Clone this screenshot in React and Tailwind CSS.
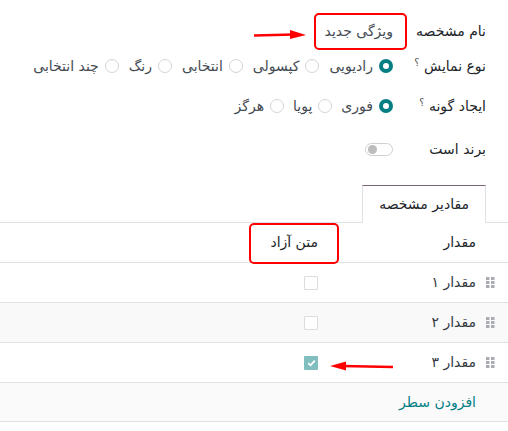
import React from "react";

const Radio = ({ checked }) =>
  checked ? (
    <span className="inline-block w-[14px] h-[14px] rounded-full border-[4px] border-[#017e84] bg-white shrink-0" />
  ) : (
    <span className="inline-block w-[14px] h-[14px] rounded-full border border-[#d4d4d4] bg-white shrink-0" />
  );

const Option = ({ checked, label }) => (
  <span className="flex items-center gap-[6px]">
    <Radio checked={checked} />
    <span className="text-[#444b53]">{label}</span>
  </span>
);

const Grip = () => (
  <svg width="9" height="11" viewBox="0 0 9 11" className="shrink-0">
    {[0, 4, 8].map((y) =>
      [0, 5].map((x) => (
        <rect key={`${x}-${y}`} x={x} y={y} width="3.5" height="3" fill="#a9adb3" />
      ))
    )}
  </svg>
);

const Checkbox = ({ checked }) =>
  checked ? (
    <span className="flex items-center justify-center w-[14px] h-[14px] bg-[#80bec0] rounded-[1px]">
      <svg width="9" height="8" viewBox="0 0 9 8">
        <path d="M1.2 4.2 L3.5 6.3 L7.8 1.6" stroke="white" strokeWidth="1.8" fill="none" />
      </svg>
    </span>
  ) : (
    <span className="block w-[14px] h-[14px] border border-[#dcdcdc] rounded-[1px] bg-white" />
  );

const rows = [
  { name: "مقدار ۱", checked: false, bg: "bg-white" },
  { name: "مقدار ۲", checked: false, bg: "bg-[#f9f9f9]" },
  { name: "مقدار ۳", checked: true, bg: "bg-white" },
];

export default function App() {
  return (
    <div
      dir="rtl"
      className="relative w-[508px] h-[431px] bg-white text-[14px] text-[#212529] overflow-hidden"
      style={{ fontFamily: '"DejaVu Sans", "Noto Sans", sans-serif' }}
    >
      <div className="pr-[22px] pt-[14px]">
        <div className="flex items-center h-[34px]">
          <div className="w-[93px] font-medium">نام مشخصه</div>
          <div className="relative text-[#444b53]">
            ویژگی جدید
            <span className="absolute -top-[8px] -bottom-[8px] -right-[14px] -left-[11px] border-[2.5px] border-[#f00] rounded-[5px]" />
          </div>
        </div>
        <div className="flex items-center h-[36px]">
          <div className="w-[93px] font-medium">
            نوع نمایش <sup className="text-[10px] text-[#555]">؟</sup>
          </div>
          <div className="flex items-center gap-[10px]">
            <Option checked label="رادیویی" />
            <Option label="کپسولی" />
            <Option label="انتخابی" />
            <Option label="رنگ" />
            <Option label="چند انتخابی" />
          </div>
        </div>
        <div className="flex items-center h-[36px] mt-[4px]">
          <div className="w-[93px] font-medium">
            ایجاد گونه <sup className="text-[10px] text-[#555]">؟</sup>
          </div>
          <div className="flex items-center gap-[9px]">
            <Option checked label="فوری" />
            <Option label="پویا" />
            <Option label="هرگز" />
          </div>
        </div>
        <div className="flex items-center h-[36px] mt-[7px]">
          <div className="w-[93px] font-medium">برند است</div>
          <span className="flex items-center justify-end w-[28px] h-[13px] rounded-full border border-[#d0d0d0] bg-white pl-[2px] pr-[2px]">
            <span className="w-[9px] h-[9px] rounded-full bg-[#bdbdbd]" />
          </span>
        </div>
      </div>

      <div className="mt-[18px] flex border-b border-[#dee2e6] pr-[22px]">
        <div className="h-[38px] -mb-[1px] px-[16px] flex items-center bg-white border-t border-t-[#7a6477] border-x border-x-[#dee2e6]">
          مقادیر مشخصه
        </div>
      </div>

      <div className="flex items-center h-[40px] border-b border-[#dee2e6] font-medium">
        <div className="w-[32px]" />
        <div className="w-[158px]">مقدار</div>
        <div className="relative">
          متن آزاد
          <span className="absolute -top-[9px] -bottom-[11px] -right-[21px] -left-[21px] border-[2.5px] border-[#f00] rounded-[5px]" />
        </div>
      </div>
      {rows.map((r) => (
        <div key={r.name} className={`flex items-center h-[40px] border-b border-[#dee2e6] ${r.bg}`}>
          <div className="w-[32px] flex justify-end pl-[10px]">
            <Grip />
          </div>
          <div className="w-[158px] text-[#343a40]">{r.name}</div>
          <Checkbox checked={r.checked} />
        </div>
      ))}
      <div className="flex items-center h-[39px] border-b border-[#dee2e6] bg-[#fafafa]">
        <div className="w-[32px]" />
        <div className="text-[#017e84]">افزودن سطر</div>
      </div>

      <svg className="absolute left-[254px] top-[29px]" width="54" height="12" viewBox="0 0 54 12">
        <line x1="0" y1="6.5" x2="40" y2="5.5" stroke="#f00" strokeWidth="2.5" />
        <path d="M36 1 L52 6 L36 10 Z" fill="#f00" />
      </svg>
      <svg className="absolute left-[328px] top-[360px]" width="66" height="12" viewBox="0 0 66 12">
        <line x1="14" y1="6" x2="65" y2="7" stroke="#f00" strokeWidth="2.5" />
        <path d="M18 1.5 L2 6 L18 10.5 Z" fill="#f00" />
      </svg>
    </div>
  );
}
